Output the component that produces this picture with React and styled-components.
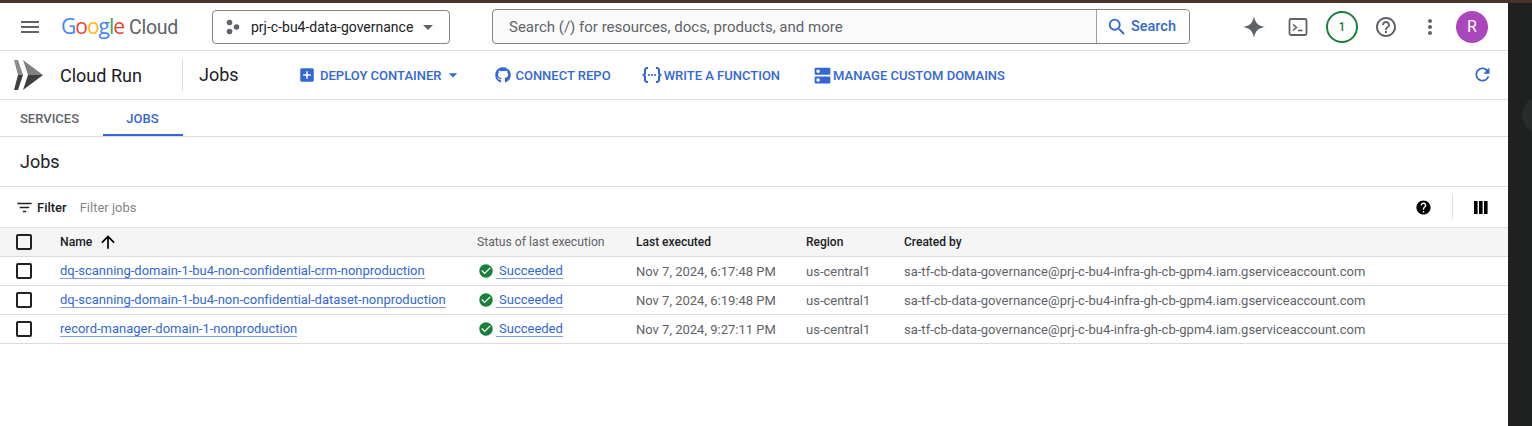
import React from "react";
import styled, { createGlobalStyle } from "styled-components";
import {
  MdMenu,
  MdSearch,
  MdArrowDropDown,
  MdAddBox,
  MdRefresh,
  MdFilterList,
  MdHelp,
  MdHelpOutline,
  MdArrowUpward,
  MdCheckCircle,
  MdMoreVert,
  MdDns,
} from "react-icons/md";
import { FaGithub } from "react-icons/fa";

const BLUE = "#3367d6";

const Global = createGlobalStyle`
  html, body { margin: 0; padding: 0; height: 100%; overflow: hidden; background: #fff; }
  body { font-family: Roboto, "Liberation Sans", sans-serif; color: #202124; }
  #root { height: 100%; }
`;

const Page = styled.div`
  display: flex;
  flex-direction: column;
  height: 426px;
  width: 1532px;
  overflow: hidden;
`;

const BrownLine = styled.div`
  height: 3px;
  flex: none;
  background: #4a3328;
`;

const Body = styled.div`
  display: flex;
  flex: 1;
  min-height: 0;
`;

const Console = styled.main`
  width: 1508px;
  flex: none;
  background: #fff;
`;

const DarkEdge = styled.aside`
  flex: 1;
  background: #1f2120;
  position: relative;
  &::after {
    content: "";
    position: absolute;
    left: 14px;
    top: 94px;
    width: 36px;
    height: 36px;
    border-radius: 50%;
    background: #2a2c2b;
  }
`;

const TopBar = styled.header`
  height: 47px;
  display: flex;
  align-items: center;
  border-bottom: 1px solid #dadce0;
  position: relative;
`;

const MenuBtn = styled.div`
  display: flex;
  width: 24px;
  margin-left: 18px;
  color: #5f6368;
  font-size: 24px;
`;

const Logo = styled.div`
  margin-left: 19px;
  width: 151px;
  display: flex;
  align-items: baseline;
  font-family: "Open Sans", Roboto, sans-serif;
  font-size: 21px;
  letter-spacing: -1px;
  line-height: 24px;
`;

const LogoPart = styled.span`
  color: ${(p) => p.$c};
`;

const CloudWord = styled.span`
  color: #5f6368;
  margin-left: 5px;
  font-family: Roboto, sans-serif;
  font-size: 19.5px;
  letter-spacing: -0.3px;
`;

const ProjectPicker = styled.div`
  width: 238px;
  height: 34px;
  box-sizing: border-box;
  border: 1px solid #80868b;
  border-radius: 4px;
  display: flex;
  align-items: center;
  padding-left: 13px;
  font-size: 14px;
  color: #202124;
`;

const PickerName = styled.span`
  margin-left: 11px;
  white-space: nowrap;
`;

const Caret = styled.span`
  display: flex;
  color: ${(p) => p.$c || "#5f6368"};
  font-size: ${(p) => p.$size || 24}px;
  margin-left: ${(p) => p.$ml || 0}px;
`;

const SearchBox = styled.div`
  margin-left: 42px;
  width: 698px;
  height: 35px;
  box-sizing: border-box;
  border: 1px solid #80868b;
  border-radius: 4px;
  background: #fafafa;
  display: flex;
  align-items: center;
`;

const SearchText = styled.span`
  flex: 1;
  padding-left: 16px;
  font-size: 15px;
  color: #5f6368;
`;

const SearchBtn = styled.div`
  width: 93px;
  height: 100%;
  border-left: 1px solid #9aa0a6;
  box-sizing: border-box;
  background: #fff;
  border-radius: 0 4px 4px 0;
  display: flex;
  align-items: center;
  gap: 3px;
  padding-left: 9px;
  color: ${BLUE};
  font-size: 14.5px;
  font-weight: 500;
`;

const TopIcons = styled.div`
  position: absolute;
  top: 0;
  left: 1242px;
  height: 47px;
  display: flex;
  align-items: center;
`;

const IconSlot = styled.span`
  width: ${(p) => p.$w}px;
  margin-left: ${(p) => p.$ml || 0}px;
  display: flex;
  justify-content: center;
  color: #5f6368;
`;

const Badge = styled.span`
  width: 32px;
  height: 32px;
  box-sizing: border-box;
  border: 2px solid #188038;
  border-radius: 50%;
  display: flex;
  align-items: center;
  justify-content: center;
  color: #188038;
  font-size: 12px;
  font-weight: 500;
`;

const Avatar = styled.span`
  width: 32px;
  height: 32px;
  border-radius: 50%;
  background: #ab47bc;
  color: #fff;
  display: flex;
  align-items: center;
  justify-content: center;
  font-size: 16px;
`;

const SubBar = styled.div`
  height: 48px;
  display: flex;
  align-items: center;
  border-bottom: 1px solid #dadce0;
  position: relative;
`;

const ProductLogo = styled.span`
  display: flex;
  margin-left: 14px;
  width: 46px;
`;

const ProductName = styled.span`
  font-size: 18px;
  color: #202124;
  width: 122px;
`;

const PageName = styled.span`
  height: 32px;
  border-left: 1px solid #dadce0;
  padding-left: 16px;
  width: 99px;
  font-size: 18px;
  line-height: 32px;
  color: #202124;
`;

const Action = styled.div`
  display: flex;
  align-items: center;
  color: ${BLUE};
  font-size: 13px;
  font-weight: 500;
  white-space: nowrap;
  margin-right: ${(p) => p.$mr}px;
  gap: ${(p) => p.$gap}px;
`;

const Refresh = styled.span`
  position: absolute;
  right: 15px;
  top: 13px;
  display: flex;
  color: ${BLUE};
  font-size: 21px;
`;

const Tabs = styled.nav`
  height: 36px;
  display: flex;
  border-bottom: 1px solid #dadce0;
`;

const Tab = styled.div`
  width: ${(p) => p.$w}px;
  margin-left: ${(p) => p.$ml || 0}px;
  box-sizing: border-box;
  display: flex;
  align-items: center;
  justify-content: center;
  padding: 2px 1px 0 0;
  font-size: 13px;
  font-weight: 500;
  color: ${(p) => (p.$active ? BLUE : "#5f6368")};
  border-bottom: 2px solid ${(p) => (p.$active ? BLUE : "transparent")};
`;

const TitleRow = styled.div`
  height: 50px;
  box-sizing: border-box;
  display: flex;
  align-items: center;
  padding: 0 0 1px 20px;
  font-size: 18px;
  color: #202124;
  border-bottom: 1px solid #dadce0;
`;

const FilterRow = styled.div`
  height: 40px;
  display: flex;
  align-items: center;
  padding-left: 15px;
  font-size: 13px;
`;

const FilterLabel = styled.span`
  font-weight: 500;
  margin-left: 3px;
  color: #202124;
`;

const FilterHint = styled.span`
  margin-left: 13px;
  color: #80868b;
`;

const FilterTools = styled.div`
  margin-left: auto;
  display: flex;
  align-items: center;
  height: 24px;
  padding-right: 20px;
  color: #000;
`;

const ToolDivider = styled.span`
  width: 1px;
  height: 24px;
  background: #e0e0e0;
  margin: 0 21px 0 20px;
`;

const Table = styled.div`
  display: flex;
  flex-direction: column;
`;

const Row = styled.div`
  height: 28px;
  display: grid;
  grid-template-columns: 60px 417px 159px 170px 98px 1fr;
  align-items: center;
  font-size: 13px;
  color: #5f6368;
  border-bottom: 1px solid #dadce0;
  white-space: nowrap;
  ${(p) =>
    p.$head &&
    `
    background: #f5f5f5;
    border-top: 1px solid #e0e0e0;
    color: #202124;
    font-size: 12px;
    font-weight: 500;
  `}
`;

const Check = styled.span`
  display: block;
  width: 16px;
  height: 16px;
  box-sizing: border-box;
  margin-left: 16px;
  border: 2px solid #202124;
  border-radius: 2px;
`;

const HeadName = styled.span`
  display: flex;
  align-items: center;
  gap: 6px;
  font-size: 12.2px;
`;

const MutedHead = styled.span`
  color: #5f6368;
  font-weight: 400;
  font-size: 12.2px;
`;

const JobLink = styled.a`
  color: ${BLUE};
  font-size: 13px;
  letter-spacing: -0.01px;
  border-bottom: 1px solid #7e9fe6;
  line-height: 14px;
  justify-self: start;
`;

const Status = styled.span`
  display: flex;
  align-items: center;
  margin-left: 1px;
  color: #188038;
  font-size: 16px;
`;

const StatusLink = styled.a`
  color: ${BLUE};
  font-size: 13px;
  border-bottom: 1px solid #7e9fe6;
  line-height: 14px;
  padding-left: 3px;
  margin-left: 2px;
`;

const CloudRunLogo = () => (
  <svg width="32" height="32" viewBox="0 0 32 32">
    <path d="M0 1 H4 L9 16 H4 Z" fill="#8a8a8a" />
    <path d="M0 31 H4 L9 16 H4 Z" fill="#3f3f3f" />
    <path d="M9 1 L29 16 H14 Z" fill="#808080" />
    <path d="M9 31 L29 16 H14 Z" fill="#3f3f3f" />
  </svg>
);

const Spark = () => (
  <svg width="24" height="24" viewBox="0 0 24 24">
    <path d="M12 1 C12.8 7.5 16.5 11.2 23 12 C16.5 12.8 12.8 16.5 12 23 C11.2 16.5 7.5 12.8 1 12 C7.5 11.2 11.2 7.5 12 1 Z" fill="#5f6368" />
  </svg>
);

const TerminalIcon = () => (
  <svg width="20" height="20" viewBox="0 0 20 20" fill="none" stroke="#5f6368">
    <rect x="1.5" y="2" width="17" height="16" rx="1.5" strokeWidth="1.8" />
    <path d="M5 7.5 L8.5 10.5 L5 13.5" strokeWidth="1.6" />
    <path d="M10 13.5 H14.5" strokeWidth="1.6" />
  </svg>
);

const FunctionIcon = () => (
  <svg width="20" height="20" viewBox="0 0 20 20" fill="none" stroke={BLUE} strokeWidth="2">
    <path d="M6 3 H4.5 L3 4.5 V8.5 L1.6 10 L3 11.5 V15.5 L4.5 17 H6" />
    <path d="M14 3 H15.5 L17 4.5 V8.5 L18.4 10 L17 11.5 V15.5 L15.5 17 H14" />
    <path d="M6.2 10 H7.8 M9.2 10 H10.8 M12.2 10 H13.8" strokeWidth="1.8" />
  </svg>
);

const ProjectDots = () => (
  <svg width="14" height="16" viewBox="0 0 14 16" fill="#5f6368">
    <circle cx="3.5" cy="3.5" r="2.8" />
    <circle cx="3.5" cy="12.5" r="2.8" />
    <circle cx="10.5" cy="8" r="2.8" />
  </svg>
);

const ColumnsIcon = () => (
  <svg width="14" height="13" viewBox="0 0 14 13" fill="#000">
    <rect x="0" y="0" width="3.6" height="13" />
    <rect x="5" y="0" width="3.6" height="13" />
    <rect x="10" y="0" width="3.6" height="13" />
  </svg>
);

const jobs = [
  ["dq-scanning-domain-1-bu4-non-confidential-crm-nonproduction", "Nov 7, 2024, 6:17:48 PM"],
  ["dq-scanning-domain-1-bu4-non-confidential-dataset-nonproduction", "Nov 7, 2024, 6:19:48 PM"],
  ["record-manager-domain-1-nonproduction", "Nov 7, 2024, 9:27:11 PM"],
];

const owner = "sa-tf-cb-data-governance@prj-c-bu4-infra-gh-cb-gpm4.iam.gserviceaccount.com";

export default function App() {
  return (
    <Page>
      <Global />
      <BrownLine />
      <Body>
        <Console>
          <TopBar>
            <MenuBtn>
              <MdMenu />
            </MenuBtn>
            <Logo>
              <LogoPart $c="#4285f4">G</LogoPart>
              <LogoPart $c="#ea4335">o</LogoPart>
              <LogoPart $c="#fbbc05">o</LogoPart>
              <LogoPart $c="#4285f4">g</LogoPart>
              <LogoPart $c="#34a853">l</LogoPart>
              <LogoPart $c="#ea4335">e</LogoPart>
              <CloudWord>Cloud</CloudWord>
            </Logo>
            <ProjectPicker>
              <ProjectDots />
              <PickerName>prj-c-bu4-data-governance</PickerName>
              <Caret $ml={3}>
                <MdArrowDropDown />
              </Caret>
            </ProjectPicker>
            <SearchBox>
              <SearchText>Search (/) for resources, docs, products, and more</SearchText>
              <SearchBtn>
                <MdSearch size={22} />
                Search
              </SearchBtn>
            </SearchBox>
            <TopIcons>
              <IconSlot $w={24}>
                <Spark />
              </IconSlot>
              <IconSlot $w={56} $ml={4}>
                <TerminalIcon />
              </IconSlot>
              <Badge>1</Badge>
              <IconSlot $w={56}>
                <MdHelpOutline size={24} />
              </IconSlot>
              <IconSlot $w={32}>
                <MdMoreVert size={24} />
              </IconSlot>
              <IconSlot $w={10} />
              <Avatar>R</Avatar>
            </TopIcons>
          </TopBar>
          <SubBar>
            <ProductLogo>
              <CloudRunLogo />
            </ProductLogo>
            <ProductName>Cloud Run</ProductName>
            <PageName>Jobs</PageName>
            <Action $mr={32} $gap={4}>
              <MdAddBox size={18} />
              DEPLOY CONTAINER
              <Caret $size={20} $c={BLUE} $ml={-2}>
                <MdArrowDropDown />
              </Caret>
            </Action>
            <Action $mr={31} $gap={4}>
              <FaGithub size={16} />
              CONNECT REPO
            </Action>
            <Action $mr={32} $gap={2}>
              <FunctionIcon />
              WRITE A FUNCTION
            </Action>
            <Action $mr={0} $gap={0}>
              <MdDns size={21} />
              MANAGE CUSTOM DOMAINS
            </Action>
            <Refresh>
              <MdRefresh />
            </Refresh>
          </SubBar>
          <Tabs>
            <Tab $w={100}>SERVICES</Tab>
            <Tab $w={80} $ml={3} $active>
              JOBS
            </Tab>
          </Tabs>
          <TitleRow>Jobs</TitleRow>
          <FilterRow>
            <MdFilterList size={19} />
            <FilterLabel>Filter</FilterLabel>
            <FilterHint>Filter jobs</FilterHint>
            <FilterTools>
              <MdHelp size={17} />
              <ToolDivider />
              <ColumnsIcon />
            </FilterTools>
          </FilterRow>
          <Table>
            <Row $head>
              <Check />
              <HeadName>
                Name
                <MdArrowUpward size={20} color="#000" />
              </HeadName>
              <MutedHead>Status of last execution</MutedHead>
              <span>Last executed</span>
              <span>Region</span>
              <span>Created by</span>
            </Row>
            {jobs.map(([name, time]) => (
              <Row key={name}>
                <Check />
                <JobLink>{name}</JobLink>
                <Status>
                  <MdCheckCircle />
                  <StatusLink>Succeeded</StatusLink>
                </Status>
                <span>{time}</span>
                <span>us-central1</span>
                <span>{owner}</span>
              </Row>
            ))}
          </Table>
        </Console>
        <DarkEdge />
      </Body>
    </Page>
  );
}
